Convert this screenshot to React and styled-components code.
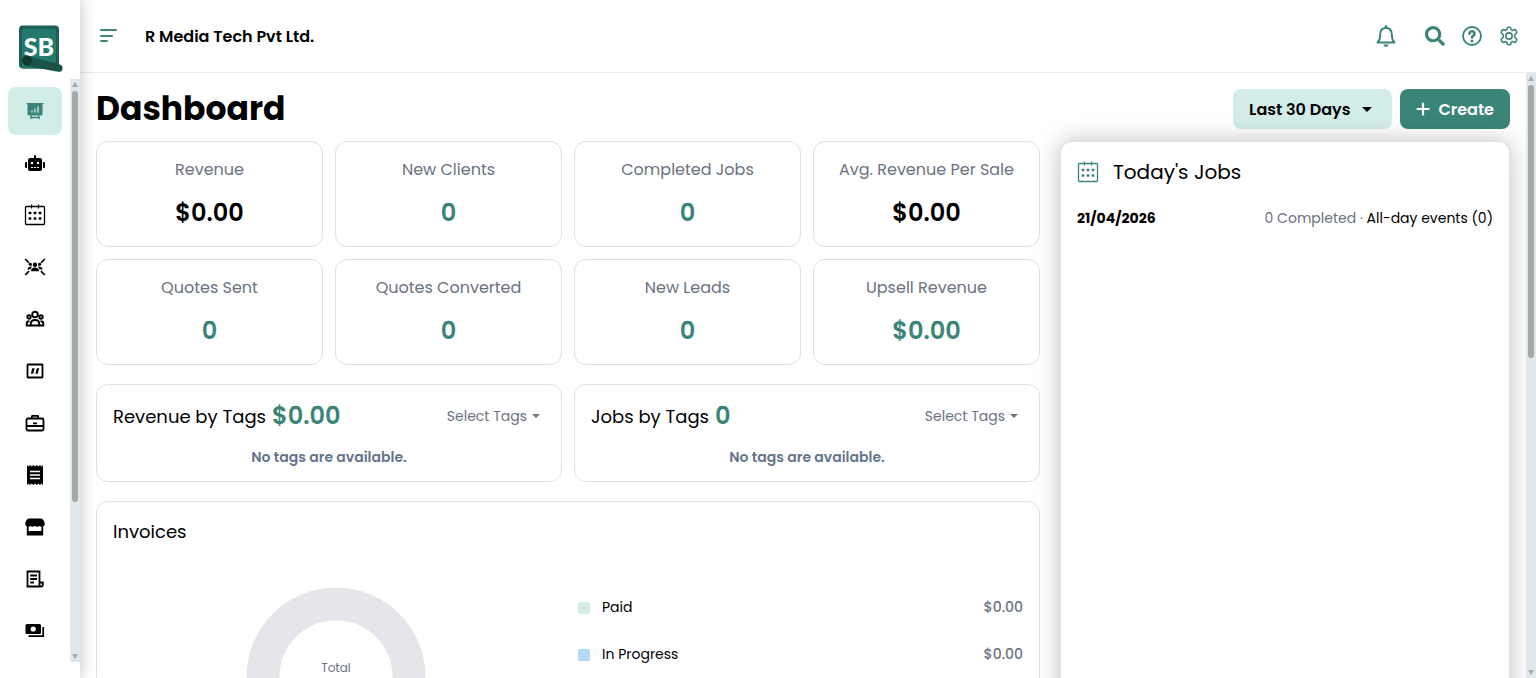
import styled, { createGlobalStyle } from "styled-components";
import { FaRobot, FaSearch } from "react-icons/fa";

const statCards = [
  { label: "Revenue", value: "$0.00", dark: true },
  { label: "New Clients", value: "0" },
  { label: "Completed Jobs", value: "0" },
  { label: "Avg. Revenue Per Sale", value: "$0.00", dark: true },
  { label: "Quotes Sent", value: "0" },
  { label: "Quotes Converted", value: "0" },
  { label: "New Leads", value: "0" },
  { label: "Upsell Revenue", value: "$0.00" },
];

const tagCards = [
  { label: "Revenue by Tags", value: "$0.00" },
  { label: "Jobs by Tags", value: "0" },
];

const invoiceRows = [
  { label: "Paid", color: "#d2ece7", value: "$0.00" },
  { label: "In Progress", color: "#b3d7f7", value: "$0.00" },
];

const navItems = [
  { name: "Dashboard", icon: <BoardIcon />, active: true },
  { name: "Assistant", icon: <FaRobot size={20} /> },
  { name: "Calendar", icon: <CalendarIcon /> },
  { name: "Leads", icon: <LeadsIcon /> },
  { name: "Clients", icon: <ClientsIcon /> },
  { name: "Quotes", icon: <QuoteIcon /> },
  { name: "Jobs", icon: <BriefcaseIcon /> },
  { name: "Invoices", icon: <ReceiptIcon /> },
  { name: "Store", icon: <StoreIcon /> },
  { name: "Expenses", icon: <BillIcon /> },
  { name: "Payments", icon: <CashIcon /> },
];

export default function App() {
  return (
    <Page>
      <GlobalStyle />
      <Sidebar>
        <LogoLink href="#home" aria-label="Home">
          <Logo />
        </LogoLink>
        <NavArea>
          <Nav>
            {navItems.map((item) => (
              <NavLink
                key={item.name}
                href="#nav"
                aria-label={item.name}
                $active={item.active}
              >
                {item.icon}
              </NavLink>
            ))}
          </Nav>
          <ScrollBar thumb={72} rest={26} />
        </NavArea>
      </Sidebar>

      <Content>
        <Header>
          <IconButton aria-label="Toggle menu">
            <MenuIcon />
          </IconButton>
          <Company>R Media Tech Pvt Ltd.</Company>
          <IconButton aria-label="Notifications">
            <BellIcon />
          </IconButton>
          <HeaderTools>
            <IconButton aria-label="Search">
              <FaSearch size={20} />
            </IconButton>
            <IconButton aria-label="Help">
              <HelpIcon />
            </IconButton>
            <IconButton aria-label="Settings">
              <GearIcon />
            </IconButton>
          </HeaderTools>
        </Header>

        <Body>
          <Main>
            <TitleRow>
              <Title>Dashboard</Title>
              <RangeButton>
                Last 30 Days <Caret $size={5} />
              </RangeButton>
              <CreateButton>
                <PlusIcon /> Create
              </CreateButton>
            </TitleRow>

            <Columns>
              <Left>
                <StatGrid>
                  {statCards.map((card) => (
                    <StatCard key={card.label}>
                      <StatLabel>{card.label}</StatLabel>
                      <StatValue $dark={card.dark}>{card.value}</StatValue>
                    </StatCard>
                  ))}
                </StatGrid>

                <TagGrid>
                  {tagCards.map((card) => (
                    <TagCard key={card.label}>
                      <TagHead>
                        <CardTitle>{card.label}</CardTitle>
                        <StatValue as="span">{card.value}</StatValue>
                        <TagButton>
                          Select Tags <Caret $size={4} />
                        </TagButton>
                      </TagHead>
                      <NoTags>No tags are available.</NoTags>
                    </TagCard>
                  ))}
                </TagGrid>

                <InvoiceCard>
                  <CardTitle>Invoices</CardTitle>
                  <InvoiceBody>
                    <ChartBox>
                      <Donut />
                    </ChartBox>
                    <Legend>
                      <tbody>
                        {invoiceRows.map((row) => (
                          <tr key={row.label}>
                            <th scope="row">
                              <Swatch $color={row.color} />
                              {row.label}
                            </th>
                            <td>{row.value}</td>
                          </tr>
                        ))}
                      </tbody>
                    </Legend>
                  </InvoiceBody>
                </InvoiceCard>
              </Left>

              <JobsPanel>
                <JobsHead>
                  <CalendarIcon />
                  <JobsTitle>Today's Jobs</JobsTitle>
                </JobsHead>
                <JobsRow>
                  <strong>21/04/2026</strong>
                  <span>
                    0 Completed · <a href="#events">All-day events (0)</a>
                  </span>
                </JobsRow>
              </JobsPanel>
            </Columns>
          </Main>
          <ScrollBar thumb={47} rest={53} />
        </Body>
      </Content>
    </Page>
  );
}

function ScrollBar({ thumb, rest }) {
  return (
    <Track aria-hidden="true">
      <Arrow $up />
      <Rail>
        <Thumb style={{ flexGrow: thumb }} />
        <div style={{ flexGrow: rest }} />
      </Rail>
      <Arrow />
    </Track>
  );
}

function Donut() {
  return (
    <svg width="180" height="180" viewBox="0 0 180 180">
      <circle cx="90" cy="90" r="73" fill="none" stroke="#e5e6ea" strokeWidth="33" />
      <text x="90" y="85" textAnchor="middle" fontSize="12" fill="#6b7280">
        Total
      </text>
    </svg>
  );
}

function Logo() {
  return (
    <svg width="46" height="48" viewBox="0 0 46 48">
      <rect x="1" y="0.500" width="40" height="43" rx="4" fill="#1a5a50" />
      <rect x="4" y="3.500" width="34" height="40" rx="2" fill="#22796c" />
      <rect
        x="2.500"
        y="2"
        width="37"
        height="41"
        rx="3"
        fill="none"
        stroke="#2d7f72"
        strokeWidth="1"
        strokeDasharray="1 1.500"
      />
      <text
        x="21"
        y="31"
        textAnchor="middle"
        fontSize="25"
        fontWeight="900"
        fontFamily="Lato, sans-serif"
        fill="#fff"
      >
        SB
      </text>
      <path d="M8 30.500 L42 39.500 Q45 40.500 44.500 44 Q44 47.300 40 46.800 L6 40.500 Z" fill="#1a5348" />
      <circle cx="9" cy="35.500" r="5" fill="#123a32" />
    </svg>
  );
}

function MenuIcon() {
  return (
    <svg width="18" height="14" viewBox="0 0 18 14" fill="currentColor">
      <rect y="0" width="17" height="2" rx="1" />
      <rect y="6" width="13" height="2" rx="1" />
      <rect y="11" width="8" height="2" rx="1" />
    </svg>
  );
}

function BellIcon() {
  return (
    <svg width="20" height="22" viewBox="0 0 20 22">
      <path
        d="M1.500 17.500 H18.500 C16.500 15.500 15.800 13.500 15.800 9.500 C15.800 5.500 13.500 3 10 3 C6.500 3 4.200 5.500 4.200 9.500 C4.200 13.500 3.500 15.500 1.500 17.500 Z"
        fill="none"
        stroke="currentColor"
        strokeWidth="1.900"
        strokeLinejoin="round"
      />
      <path d="M8.600 3 V1.700 A1.400 1.400 0 0 1 11.400 1.700 V3 Z" fill="currentColor" />
      <path d="M7.200 19.600 H12.800 Q12 22 10 22 Q8 22 7.200 19.600 Z" fill="currentColor" />
    </svg>
  );
}

function HelpIcon() {
  return (
    <svg width="20" height="20" viewBox="0 0 20 20" fill="none" stroke="currentColor">
      <circle cx="10" cy="10" r="9" strokeWidth="1.800" />
      <path
        d="M7.500 7.700 A2.500 2.300 0 1 1 11.300 9.600 Q10 10.400 10 11.600"
        strokeWidth="2.500"
        strokeLinecap="round"
      />
      <circle cx="10" cy="14.900" r="1.500" fill="currentColor" stroke="none" />
    </svg>
  );
}

function GearIcon() {
  return (
    <svg
      width="20"
      height="20"
      viewBox="0 0 24 24"
      fill="none"
      stroke="currentColor"
      strokeWidth="1.900"
      strokeLinejoin="round"
    >
      <path d="M9.600 3.900 C9.700 3.400 10.100 1.500 10.700 1.500 H13.300 C13.900 1.500 14.300 3.400 14.400 3.900 C14.500 4.600 15.800 5.500 16.600 5.200 L18.600 4.400 C19.100 4.200 19.600 4.400 19.900 4.800 L21.200 7.100 C21.500 7.600 21.400 8.200 21 8.500 L19.300 9.900 C18.600 10.500 18.600 13.500 19.300 14.100 L21 15.500 C21.400 15.800 21.500 16.400 21.200 16.900 L19.900 19.200 C19.600 19.600 19.100 19.800 18.600 19.600 L16.600 18.800 C15.800 18.500 14.500 19.400 14.400 20.100 C14.300 20.600 13.900 22.500 13.300 22.500 H10.700 C10.100 22.500 9.700 20.600 9.600 20.100 C9.500 19.400 8.200 18.500 7.400 18.800 L5.400 19.600 C4.900 19.800 4.400 19.600 4.100 19.200 L2.800 16.900 C2.500 16.400 2.600 15.800 3 15.500 L4.700 14.100 C5.400 13.500 5.400 10.500 4.700 9.900 L3 8.500 C2.600 8.200 2.500 7.600 2.800 7.100 L4.100 4.800 C4.400 4.400 4.900 4.200 5.400 4.400 L7.400 5.200 C8.200 5.500 9.500 4.600 9.600 3.900 Z" />
      <circle cx="12" cy="12" r="3.800" />
    </svg>
  );
}

function PlusIcon() {
  return (
    <svg
      width="14"
      height="14"
      viewBox="0 0 14 14"
      stroke="currentColor"
      strokeWidth="2.200"
      strokeLinecap="round"
    >
      <path d="M7 1.500 V12.500 M1.500 7 H12.500" />
    </svg>
  );
}

function BoardIcon() {
  return (
    <svg width="18" height="18" viewBox="0 0 18 18">
      <path
        d="M0.500 1 H17.500 V2.200 H16.500 V12 Q16.500 13.500 15 13.500 H3 Q1.500 13.500 1.500 12 V2.200 H0.500 Z"
        fill="#3a8478"
      />
      <path
        d="M5.500 13.500 L4.500 17 M12.500 13.500 L13.500 17 M5 15.500 H13"
        stroke="#3a8478"
        strokeWidth="1.300"
      />
      <path d="M6 10.500 V8.500 M9 10.500 V6.500 M12 10.500 V4.500" stroke="#d2ece7" strokeWidth="1.300" />
    </svg>
  );
}

function CalendarIcon() {
  return (
    <svg width="22" height="22" viewBox="0 0 22 22" fill="currentColor">
      <rect
        x="1.500"
        y="2.500"
        width="19"
        height="18"
        rx="1"
        fill="none"
        stroke="currentColor"
        strokeWidth="1.300"
      />
      <path d="M7.500 0.500 V4.500 M14.500 0.500 V4.500" stroke="currentColor" strokeWidth="1.200" />
      {[6, 11, 16].map((x) =>
        [9, 14.5].map((y) => (
          <rect key={x + "-" + y} x={x - 1.3} y={y - 1.3} width="2.600" height="2.600" rx="0.500" />
        ))
      )}
    </svg>
  );
}

function LeadsIcon() {
  return (
    <svg width="22" height="18" viewBox="0 0 22 18" fill="currentColor">
      <path
        d="M1.200 1 L5 4.800 M20.800 1 L17 4.800 M1.200 17 L5 13.200 M20.800 17 L17 13.200"
        stroke="currentColor"
        strokeWidth="1.700"
      />
      <circle cx="11" cy="6.800" r="2.200" />
      <circle cx="6.400" cy="6.300" r="1.600" />
      <circle cx="15.600" cy="6.300" r="1.600" />
      <path d="M7 13.200 Q7 9.600 11 9.600 Q15 9.600 15 13.200 Z" />
      <path d="M3.500 11.400 Q3.500 8.500 8 8.600 L6.300 11.400 Z M18.500 11.400 Q18.500 8.500 14 8.600 L15.700 11.400 Z" />
    </svg>
  );
}

function ClientsIcon() {
  return (
    <svg
      width="20"
      height="18"
      viewBox="0 0 20 18"
      fill="none"
      stroke="currentColor"
      strokeWidth="1.900"
    >
      <circle cx="10" cy="4.500" r="2.800" />
      <circle cx="4" cy="7" r="1.700" />
      <circle cx="16" cy="7" r="1.700" />
      <path d="M5.800 15.500 V13.500 Q5.800 10 10 10 Q14.200 10 14.200 13.500 V15.500 Z" />
      <path d="M5.500 15.500 H1.700 V13.500 Q1.700 11.200 4.500 11.200 M14.500 15.500 H18.300 V13.500 Q18.300 11.200 15.500 11.200" />
    </svg>
  );
}

function QuoteIcon() {
  return (
    <svg width="18" height="16" viewBox="0 0 18 16">
      <rect
        x="1.500"
        y="1.500"
        width="15"
        height="13"
        rx="0.500"
        fill="none"
        stroke="currentColor"
        strokeWidth="1.800"
      />
      <path
        d="M4.800 10.800 L6.300 5.300 H8.700 L7.200 10.800 Z M9.300 10.800 L10.800 5.300 H13.200 L11.700 10.800 Z"
        fill="currentColor"
      />
    </svg>
  );
}

function BriefcaseIcon() {
  return (
    <svg
      width="20"
      height="18"
      viewBox="0 0 20 18"
      fill="none"
      stroke="currentColor"
      strokeWidth="1.800"
    >
      <rect x="1.500" y="4.500" width="17" height="12" rx="1.500" />
      <path d="M6.500 4.500 L7.200 1.800 H12.800 L13.500 4.500 M1.500 12 H18.500 M8 9.300 H12" />
    </svg>
  );
}

function ReceiptIcon() {
  return (
    <svg width="16" height="20" viewBox="0 0 16 20">
      <path
        d="M0 0 L1.500 1.500 L3 0 L4.700 1.500 L6.300 0 L8 1.500 L9.700 0 L11.300 1.500 L13 0 L14.500 1.500 L16 0 V20 L14.500 18.500 L13 20 L11.300 18.500 L9.700 20 L8 18.500 L6.300 20 L4.700 18.500 L3 20 L1.500 18.500 L0 20 Z"
        fill="currentColor"
      />
      <path d="M3 6.500 H13 M3 10 H13 M3 13.500 H13" stroke="#fff" strokeWidth="1.300" />
    </svg>
  );
}

function StoreIcon() {
  return (
    <svg width="20" height="18" viewBox="0 0 20 18" fill="currentColor">
      <path d="M3.500 0.500 H16.500 Q19.500 2 19.800 6 Q19.500 8.500 17.500 8.500 Q15.500 9 14.500 8 Q12.500 9.300 10 8 Q7.500 9.300 5.500 8 Q4.500 9 2.500 8.500 Q0.500 8.500 0.200 6 Q0.500 2 3.500 0.500 Z" />
      <path d="M1.800 8 H3.600 V13 H16.400 V8 H18.200 V17.500 H1.800 Z" />
    </svg>
  );
}

function BillIcon() {
  return (
    <svg
      width="18"
      height="18"
      viewBox="0 0 18 18"
      fill="none"
      stroke="currentColor"
      strokeWidth="1.800"
    >
      <path d="M13.500 12.500 V1.500 H1.500 V16.500 H15.500 Q16.800 16.500 16.800 15 V12.500 H13.500 V15 Q13.500 16.500 15 16.500" />
      <path d="M4.200 5.500 H11 M4.200 9 H11 M4.200 12.500 H8" />
    </svg>
  );
}

function CashIcon() {
  return (
    <svg width="20" height="16" viewBox="0 0 20 16" fill="currentColor">
      <path
        fillRule="evenodd"
        d="M2 1 H14.500 Q16 1 16 2.500 V9.500 Q16 11 14.500 11 H2 Q0.500 11 0.500 9.500 V2.500 Q0.500 1 2 1 Z M8.250 3.400 A2.600 2.600 0 1 0 8.250 8.600 A2.600 2.600 0 1 0 8.250 3.400 Z"
      />
      <path d="M18.200 4 V13.200 H3.500" fill="none" stroke="currentColor" strokeWidth="1.700" />
    </svg>
  );
}

const GlobalStyle = createGlobalStyle`
  * {
    box-sizing: border-box;
  }
  body {
    margin: 0;
    overflow: hidden;
    background: #fff;
    color: #000;
    font-family: Poppins, Inter, sans-serif;
    font-size: 14px;
  }
  button {
    font-family: inherit;
    border: 0;
    cursor: pointer;
  }
  svg {
    display: block;
    flex-shrink: 0;
  }
`;

const Page = styled.div`
  display: flex;
  height: 100vh;
`;

const Sidebar = styled.aside`
  display: flex;
  flex-direction: column;
  flex-shrink: 0;
  width: 80px;
  padding-bottom: 16px;
  z-index: 1;
  background: #fff;
  box-shadow: 0 0 15px rgba(0, 0, 0, 0.25);
`;

const LogoLink = styled.a`
  display: flex;
  flex-shrink: 0;
  height: 79px;
  padding: 25px 0 0 18px;
`;

const NavArea = styled.div`
  display: flex;
  flex: 1;
  min-height: 0;
`;

const Nav = styled.nav`
  display: flex;
  flex: 1;
  flex-direction: column;
  gap: 4px;
  padding: 8px 8px 0;
  overflow: hidden;
`;

const NavLink = styled.a`
  display: flex;
  align-items: center;
  justify-content: center;
  flex-shrink: 0;
  height: 48px;
  border-radius: 8px;
  color: #000;
  background: ${(props) => (props.$active ? "#d2ece7" : "transparent")};
`;

const Track = styled.div`
  display: flex;
  flex-direction: column;
  flex-shrink: 0;
  width: 10px;
  padding: 3px 2px;
  background: #dfe8ea;
`;

const Arrow = styled.div`
  border: 3px solid transparent;
  border-top: ${(props) => (props.$up ? "0" : "5px solid #a8a8a8")};
  border-bottom: ${(props) => (props.$up ? "5px solid #a8a8a8" : "0")};
`;

const Rail = styled.div`
  display: flex;
  flex: 1;
  flex-direction: column;
  padding: 4px 0;
`;

const Thumb = styled.div`
  border-radius: 3px;
  background: #a8a8a8;
`;

const Content = styled.div`
  display: flex;
  flex: 1;
  flex-direction: column;
  min-width: 0;
`;

const Header = styled.header`
  display: flex;
  align-items: center;
  flex-shrink: 0;
  height: 73px;
  padding: 0 17px 0 20px;
  border-bottom: 1px solid #e9edf1;
`;

const IconButton = styled.button`
  display: flex;
  padding: 0;
  background: none;
  color: #3a8478;
`;

const Company = styled.div`
  flex: 1;
  padding-left: 27px;
  font-size: 16px;
  font-weight: 600;
`;

const HeaderTools = styled.div`
  display: flex;
  gap: 17px;
  padding-left: 29px;
`;

const Body = styled.div`
  display: flex;
  flex: 1;
  min-height: 0;
`;

const Main = styled.main`
  display: flex;
  flex: 1;
  flex-direction: column;
  gap: 12px;
  min-width: 0;
  padding: 16px 16px 0;
  overflow: hidden;
`;

const TitleRow = styled.div`
  display: flex;
  align-items: center;
  gap: 8px;
  height: 40px;
`;

const Title = styled.h1`
  flex: 1;
  margin: 0;
  font-size: 33px;
  line-height: 40px;
  font-weight: 700;
`;

const RangeButton = styled.button`
  display: flex;
  align-items: center;
  gap: 12px;
  height: 40px;
  padding: 0 20px 0 16px;
  border-radius: 8px;
  background: #d2ece7;
  color: #000;
  font-size: 16px;
  font-weight: 600;
`;

const CreateButton = styled(RangeButton)`
  gap: 8px;
  padding: 0 16px;
  background: #3a8478;
  color: #fff;
`;

const Caret = styled.span`
  border: ${(props) => props.$size}px solid transparent;
  border-top-color: currentColor;
  border-bottom: 0;
`;

const Columns = styled.div`
  display: grid;
  grid-template-columns: minmax(0, 1fr) 450px;
  gap: 20px;
  flex: 1;
  min-height: 0;
`;

const Left = styled.div`
  display: flex;
  flex-direction: column;
  gap: 19px;
`;

const StatGrid = styled.div`
  display: grid;
  grid-template-columns: repeat(4, 1fr);
  gap: 12px;
`;

const TagGrid = styled.div`
  display: grid;
  grid-template-columns: repeat(2, 1fr);
  gap: 12px;
`;

const Card = styled.section`
  padding: 16px;
  border: 1px solid #dfe1e3;
  border-radius: 12px;
`;

const StatCard = styled(Card)`
  display: flex;
  flex-direction: column;
  align-items: center;
  gap: 13px;
  height: 106px;
`;

const StatLabel = styled.div`
  color: #6b7280;
  font-size: 16px;
  line-height: 24px;
`;

const StatValue = styled.div`
  color: ${(props) => (props.$dark ? "#000" : "#3a8478")};
  font-size: 24px;
  line-height: 36px;
  font-weight: 600;
`;

const TagCard = styled(Card)`
  height: 98px;
  padding: 13px 16px;
`;

const TagHead = styled.div`
  display: flex;
  align-items: center;
  gap: 6px;
`;

const CardTitle = styled.h2`
  margin: 0;
  font-size: 18px;
  line-height: 27px;
  font-weight: 400;
`;

const TagButton = styled.button`
  display: flex;
  align-items: center;
  gap: 5px;
  margin-left: auto;
  padding: 0 5px 0 0;
  background: none;
  color: #6b7280;
  font-size: 14px;
`;

const NoTags = styled.p`
  margin: 13px 0 0;
  color: #64748b;
  font-size: 14px;
  line-height: 21px;
  font-weight: 600;
  text-align: center;
`;

const InvoiceCard = styled(Card)`
  height: 360px;
`;

const InvoiceBody = styled.div`
  display: grid;
  grid-template-columns: repeat(2, 1fr);
  gap: 20px;
  align-items: start;
  padding-top: 39px;
`;

const ChartBox = styled.div`
  display: flex;
  justify-content: center;
  padding-top: 3px;
`;

const Legend = styled.table`
  width: 100%;
  border-collapse: collapse;

  th,
  td {
    height: 47px;
    padding: 0;
    font-weight: 400;
    text-align: left;
  }
  td {
    color: #6b7280;
    font-weight: 500;
    text-align: right;
  }
`;

const Swatch = styled.span`
  display: inline-block;
  width: 12px;
  height: 12px;
  margin-right: 12px;
  border-radius: 2px;
  vertical-align: middle;
  background: ${(props) => props.$color};
`;

const JobsPanel = styled.section`
  padding: 15px 16px;
  border: 1px solid #dfe1e3;
  border-bottom: 0;
  border-radius: 12px 12px 0 0;
  background: #fff;
  box-shadow: 0 0 24px rgba(0, 0, 0, 0.25);
`;

const JobsHead = styled.div`
  display: flex;
  align-items: center;
  gap: 14px;
  color: #3a8478;
`;

const JobsTitle = styled.h2`
  margin: 0;
  color: #000;
  font-size: 20px;
  line-height: 30px;
  font-weight: 400;
`;

const JobsRow = styled.div`
  display: flex;
  justify-content: space-between;
  margin-top: 21px;
  color: #6b7280;
  line-height: 21px;

  strong {
    color: #000;
  }
  a {
    color: #000;
    text-decoration: none;
  }
`;
